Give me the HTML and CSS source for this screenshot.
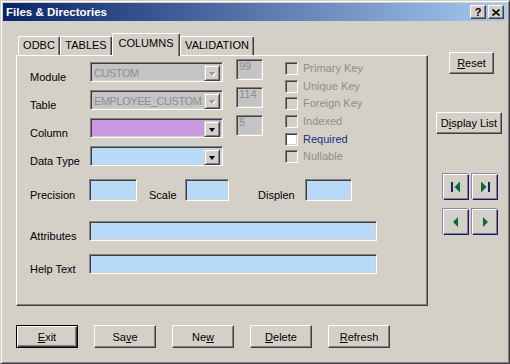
FILE: index.html
```html
<!DOCTYPE html>
<html lang="en">
<head>
    <meta charset="UTF-8">
    <title>Files &amp; Directories</title>
    <link rel="stylesheet" href="styles.css">
</head>
<body>
<div class="window">
    <div class="titlebar">
        <span class="title">Files &amp; Directories</span>
        <div class="caption-btns">
            <span class="cbtn">?</span>
            <span class="cbtn">
                <svg width="8" height="7" viewBox="0 0 8 7"><path d="M0.5 0.5 L7.5 6.5 M7.5 0.5 L0.5 6.5" stroke="#000" stroke-width="1.6"/></svg>
            </span>
        </div>
    </div>

    <div class="main">
        <div class="left">
            <div class="tabs">
                <div class="tab tab-odbc">ODBC</div>
                <div class="tab tab-tables">TABLES</div>
                <div class="tab tab-columns active">COLUMNS</div>
                <div class="tab tab-validation">VALIDATION</div>
            </div>

            <div class="panel">
                <div class="top">
                    <div class="fields">
                        <span class="lbl">Module</span>
                        <div class="combo disabled">
                            <span class="value">CUSTOM</span>
                            <span class="drop"><span class="tri"></span></span>
                        </div>
                        <span class="numbox">99</span>

                        <span class="lbl">Table</span>
                        <div class="combo disabled">
                            <span class="value">EMPLOYEE_CUSTOM</span>
                            <span class="drop"><span class="tri"></span></span>
                        </div>
                        <span class="numbox">114</span>

                        <span class="lbl">Column</span>
                        <div class="combo purple">
                            <span class="value"></span>
                            <span class="drop"><span class="tri"></span></span>
                        </div>
                        <span class="numbox">5</span>

                        <span class="lbl">Data Type</span>
                        <div class="combo blue">
                            <span class="value"></span>
                            <span class="drop"><span class="tri"></span></span>
                        </div>
                    </div>

                    <div class="checks">
                        <label class="chk"><span class="cb"></span>Primary Key</label>
                        <label class="chk"><span class="cb"></span>Unique Key</label>
                        <label class="chk"><span class="cb"></span>Foreign Key</label>
                        <label class="chk"><span class="cb"></span>Indexed</label>
                        <label class="chk on"><span class="cb"></span>Required</label>
                        <label class="chk"><span class="cb"></span>Nullable</label>
                    </div>
                </div>

                <div class="sizes">
                    <span class="lbl lbl-precision">Precision</span>
                    <span class="field box-precision"></span>
                    <span class="lbl lbl-scale">Scale</span>
                    <span class="field box-scale"></span>
                    <span class="lbl lbl-displen">Displen</span>
                    <span class="field box-displen"></span>
                </div>

                <div class="line">
                    <span class="lbl">Attributes</span>
                    <span class="field wide"></span>
                </div>
                <div class="line line-help">
                    <span class="lbl">Help Text</span>
                    <span class="field wide"></span>
                </div>
            </div>

            <div class="actions">
                <button class="btn default"><span><u>E</u>xit</span></button>
                <button class="btn"><span>Sa<u>v</u>e</span></button>
                <button class="btn"><span>Ne<u>w</u></span></button>
                <button class="btn"><span><u>D</u>elete</span></button>
                <button class="btn"><span><u>R</u>efresh</span></button>
            </div>
        </div>

        <div class="right">
            <button class="btn reset"><span><u>R</u>eset</span></button>
            <button class="btn display"><span>D<u>i</u>splay List</span></button>
            <div class="nav">
                <button class="btn navbtn">
                    <svg width="12" height="12" viewBox="0 0 12 12"><rect x="1" y="1" width="2" height="10" fill="#1a2466"/><polygon points="10,0.5 4.5,6 10,11.5" fill="#0b6a3c"/></svg>
                </button>
                <button class="btn navbtn">
                    <svg width="12" height="12" viewBox="0 0 12 12"><polygon points="2,0.5 7.5,6 2,11.5" fill="#0b6a3c"/><rect x="9" y="1" width="2" height="10" fill="#1a2466"/></svg>
                </button>
                <button class="btn navbtn">
                    <svg width="12" height="12" viewBox="0 0 12 12"><polygon points="8,1 3,6 8,11" fill="#0b6a3c"/></svg>
                </button>
                <button class="btn navbtn">
                    <svg width="12" height="12" viewBox="0 0 12 12"><polygon points="4,1 9,6 4,11" fill="#0b6a3c"/></svg>
                </button>
            </div>
        </div>
    </div>
</div>
</body>
</html>
```

FILE: styles.css
```css
body {
    margin: 0;
    background: #d4d0c8;
    font-family: "Liberation Sans", Arial, sans-serif;
    font-size: 11px;
    color: #000;
}

.window {
    width: 510px;
    height: 364px;
    box-sizing: border-box;
    padding: 2px;
    background: #d4d0c8;
    border: 1px solid;
    border-color: #d4d0c8 #404040 #404040 #d4d0c8;
    box-shadow: inset 1px 1px #fff, inset -1px -1px #808080;
}

/* title bar */
.titlebar {
    height: 18px;
    display: flex;
    align-items: center;
    justify-content: space-between;
    padding: 0 3px 0 3px;
    background: linear-gradient(to right, #0a246a, #a6caf0);
}

.title {
    color: #fff;
    font-weight: bold;
    font-size: 11.5px;
}

.caption-btns {
    display: flex;
    gap: 2px;
}

.cbtn {
    width: 16px;
    height: 14px;
    box-sizing: border-box;
    display: flex;
    align-items: center;
    justify-content: center;
    background: #d4d0c8;
    border: 1px solid;
    border-color: #fff #404040 #404040 #fff;
    box-shadow: inset -1px -1px #808080;
    font-weight: bold;
    font-size: 11px;
    line-height: 11px;
}

/* layout */
.main {
    display: flex;
    padding: 12px 0 0 13px;
}

.left {
    width: 412px;
}

/* tabs */
.tabs {
    display: flex;
    align-items: flex-end;
    height: 22px;
    padding-left: 2px;
}

.tab {
    box-sizing: border-box;
    height: 19px;
    padding-top: 2px;
    line-height: 13px;
    text-align: center;
    border-top: 1px solid #fff;
    border-left: 1px solid #fff;
    border-right: 1px solid #404040;
    box-shadow: inset -1px 0 #808080;
    border-radius: 2px 2px 0 0;
    background: #d4d0c8;
}

.tab-odbc { width: 42px; }
.tab-tables { width: 52px; }
.tab-columns { width: 68px; }
.tab-validation { width: 74px; }

.tab.active {
    height: 23px;
    margin-bottom: -1px;
    padding-top: 3px;
    position: relative;
    z-index: 1;
}

.panel {
    height: 251px;
    box-sizing: border-box;
    padding: 6px 0 0 13px;
    border: 1px solid;
    border-color: #fff #404040 #404040 #fff;
    box-shadow: inset -1px -1px #808080;
}

.top {
    display: flex;
    align-items: flex-start;
}

.fields {
    display: grid;
    grid-template-columns: 60px 133px 40px;
    grid-auto-rows: 20px;
    row-gap: 8px;
}

.lbl {
    line-height: 13px;
    padding-top: 9px;
    white-space: nowrap;
}

/* sunken edit look */
.combo,
.numbox,
.field {
    box-sizing: border-box;
    border: 1px solid;
    border-color: #808080 #fff #fff #808080;
    box-shadow: inset 1px 1px #404040, inset -1px -1px #d4d0c8;
}

.combo {
    display: flex;
    padding: 2px;
}

.combo .value {
    flex: 1;
    line-height: 16px;
    padding-left: 1px;
    overflow: hidden;
    white-space: nowrap;
    letter-spacing: -0.45px;
}

.combo.disabled { background: #c4c4c4; color: #8e8e8e; }
.combo.purple { background: #c99adf; }
.combo.blue { background: #b9d9f9; }

.drop {
    width: 16px;
    height: 16px;
    box-sizing: border-box;
    display: flex;
    align-items: center;
    justify-content: center;
    background: #d4d0c8;
    border: 1px solid;
    border-color: #d4d0c8 #404040 #404040 #d4d0c8;
    box-shadow: inset 1px 1px #fff, inset -1px -1px #808080;
}

.tri {
    width: 0;
    height: 0;
    border-left: 3.5px solid transparent;
    border-right: 3.5px solid transparent;
    border-top: 4px solid #000;
    margin-top: 1px;
}

.disabled .tri {
    border-top-color: #9a9a9a;
    filter: drop-shadow(1px 1px 0 #fff);
}

.numbox {
    justify-self: end;
    width: 27px;
    height: 21px;
    margin-top: -3px;
    padding: 0 2px;
    line-height: 12px;
    background: #c4c4c4;
    color: #8e8e8e;
}

/* checkboxes */
.checks {
    margin-left: 22px;
    display: grid;
    grid-auto-rows: 17.7px;
}

.chk {
    display: flex;
    align-items: flex-start;
    color: #8d8d8d;
    line-height: 13px;
}

.chk.on {
    color: #1e2b7d;
}

.cb {
    width: 13px;
    height: 13px;
    box-sizing: border-box;
    margin-right: 5px;
    border: 1px solid;
    border-color: #808080 #fff #fff #808080;
    box-shadow: inset 1px 1px #404040, inset -1px -1px #d4d0c8;
    background: #d4d0c8;
}

.chk.on .cb {
    background: #fff;
}

/* size fields */
.sizes {
    display: flex;
    align-items: flex-start;
    margin-top: 11px;
}

.sizes .lbl {
    padding-top: 10px;
}

.field {
    display: block;
    background: #b9d9f9;
}

.lbl-precision { width: 59px; }
.box-precision { width: 48px; height: 22px; }
.lbl-scale { width: 36px; margin-left: 12px; }
.box-scale { width: 44px; height: 22px; }
.lbl-displen { width: 47px; margin-left: 29px; }
.box-displen { width: 47px; height: 22px; }

.line {
    display: flex;
    align-items: flex-start;
    margin-top: 19px;
}

.line-help {
    margin-top: 11px;
}

.line .lbl {
    width: 59px;
}

.field.wide {
    width: 288px;
    height: 20px;
}

/* buttons */
.btn {
    box-sizing: border-box;
    display: flex;
    align-items: center;
    justify-content: center;
    padding: 0;
    margin: 0;
    font: inherit;
    color: #000;
    background: #d4d0c8;
    border: 1px solid;
    border-color: #fff #404040 #404040 #fff;
    box-shadow: inset -1px -1px #808080;
}

.btn.default {
    border-color: #000;
    box-shadow: inset 1px 1px #fff, inset -1px -1px #404040, inset -2px -2px #808080;
}

.actions {
    display: flex;
    gap: 16px;
    margin-top: 19px;
}

.actions .btn {
    width: 62px;
    height: 23px;
}

.right {
    margin-left: 8px;
    width: 66px;
    padding-top: 19px;
    display: flex;
    flex-direction: column;
    align-items: flex-start;
}

.reset {
    width: 45px;
    height: 22px;
    margin-left: 13px;
}

.display {
    width: 66px;
    height: 22px;
    margin-top: 38px;
}

.nav {
    margin: 40px 0 0 7px;
    display: grid;
    grid-template-columns: 26px 26px;
    column-gap: 3px;
    row-gap: 9px;
}

.navbtn {
    width: 26px;
    height: 26px;
    border-color: #fff #1c1c5c #1c1c5c #fff;
    box-shadow: inset -1px -1px #7c7c98, -1px -1px 0 #8a8aa8;
}
```
